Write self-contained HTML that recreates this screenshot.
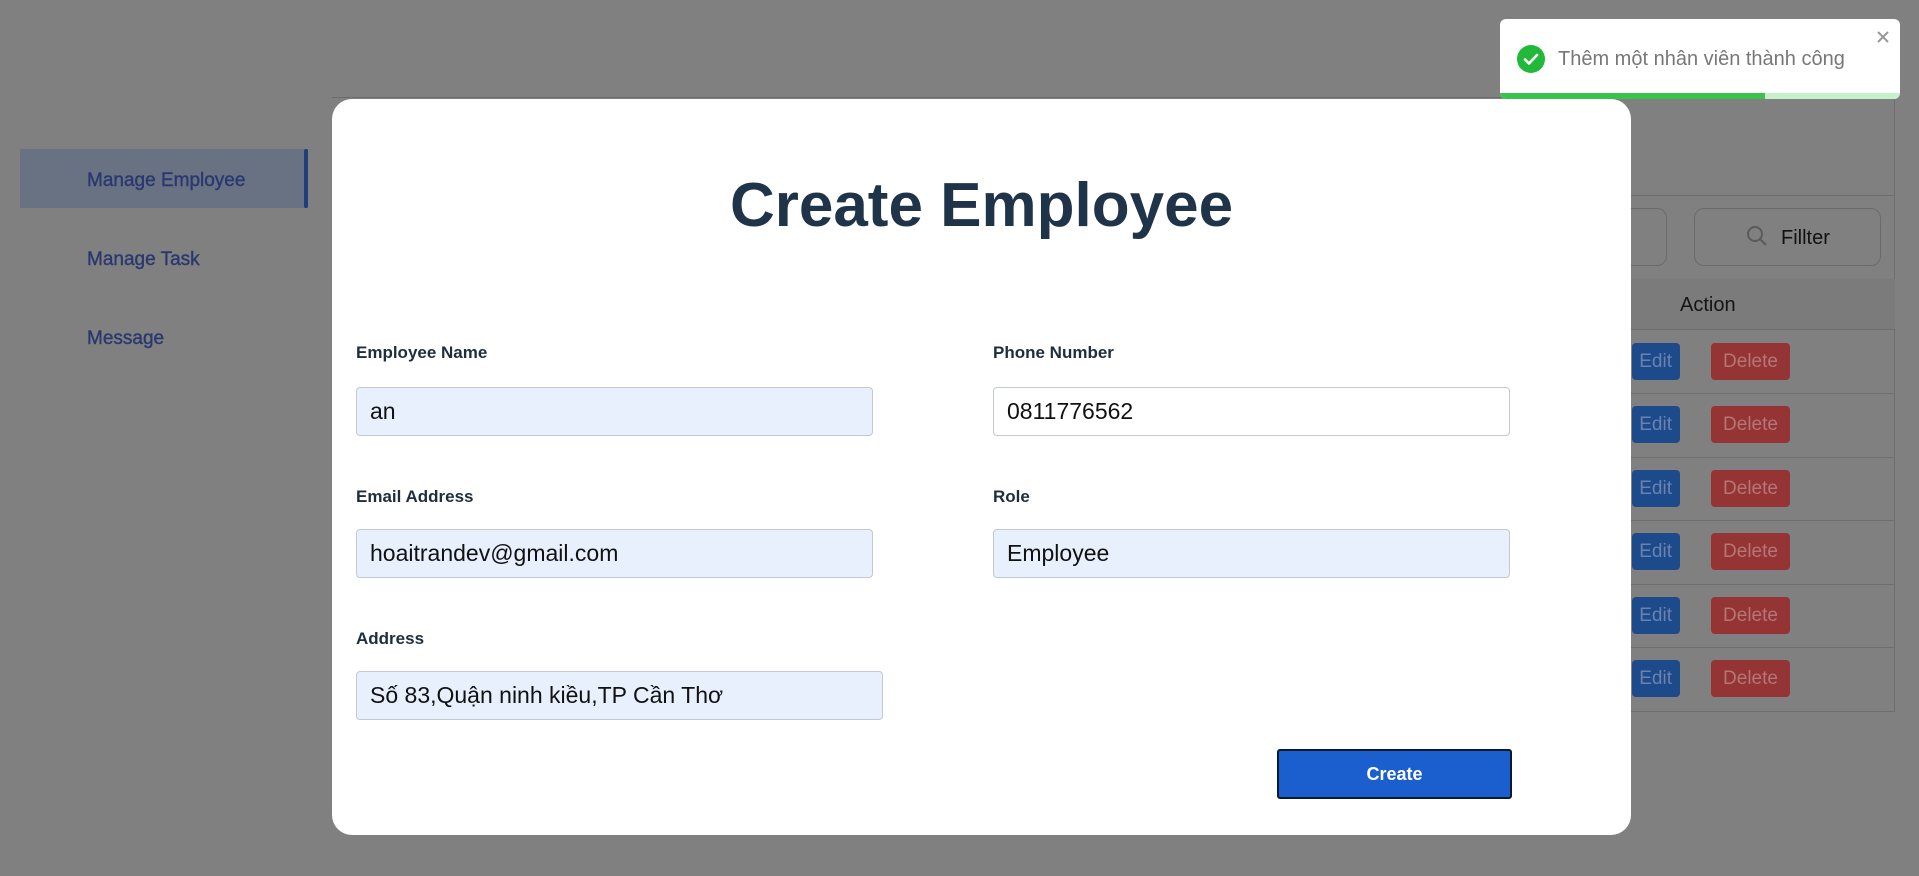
<!DOCTYPE html>
<html><head><meta charset="utf-8"><style>
*{box-sizing:border-box;margin:0;padding:0}
body{width:1919px;height:876px;background:#808080;position:relative;overflow:hidden;font-family:"Liberation Sans","Noto Sans CJK SC",sans-serif}
.a{position:absolute}
.nav{left:87px;font-size:19px;color:#2b3870;line-height:24px;-webkit-text-stroke:0.4px #2b3870}
.lbl{font-size:17px;font-weight:bold;color:#1f2d3d;line-height:20px}
.inp{height:49px;border:1px solid #c4c8d0;border-radius:4px;background:#e8f0fe;font-size:23px;color:#111;padding-left:13px;line-height:47px}
.edit{left:1632px;width:48px;height:37px;background:#1d4a8a;border-radius:4px;color:#6a82ad;font-size:19px;line-height:37px;text-align:right;padding-right:8px}
.del{left:1711px;width:79px;height:37px;background:#943434;border-radius:4px;color:#b57676;font-size:19px;line-height:37px;text-align:center}
.hl{left:1630px;width:265px;height:1px;background:#6e6e6e}
</style></head><body>
<div class="a" style="left:20px;top:149px;width:288px;height:59px;background:#687282"></div>
<div class="a" style="left:304px;top:149px;width:4px;height:59px;background:#1f3f7a;border-radius:2px"></div>
<div class="a nav" style="top:169px">Manage Employee</div>
<div class="a nav" style="top:248px">Manage Task</div>
<div class="a nav" style="top:327px">Message</div>
<div class="a" style="left:332px;top:97px;width:1563px;height:615px;border:1px solid #6e6e6e;border-left:none"></div>
<div class="a" style="left:332px;top:195px;width:1563px;height:1px;background:#6e6e6e"></div>
<div class="a" style="left:1600px;top:208px;width:67px;height:58px;border:1px solid #6a6a6a;border-radius:10px;border-left:none"></div>
<div class="a" style="left:1694px;top:208px;width:187px;height:58px;border:1px solid #6a6a6a;border-radius:10px"></div>
<svg class="a" style="left:1745px;top:224px" width="24" height="24" viewBox="0 0 24 24"><circle cx="10" cy="10" r="7" fill="none" stroke="#5a5a5a" stroke-width="2"/><path d="M15 15l6 6" stroke="#5a5a5a" stroke-width="2"/></svg>
<div class="a" style="left:1781px;top:227px;font-size:20px;color:#111">Fillter</div>
<div class="a" style="left:1630px;top:279px;width:265px;height:50px;background:#7b7b7b"></div>
<div class="a" style="left:1680px;top:294px;font-size:20px;color:#151515">Action</div>
<div class="a hl" style="top:329px"></div>
<div class="a edit" style="top:343px">Edit</div><div class="a del" style="top:343px">Delete</div>
<div class="a hl" style="top:393px"></div>
<div class="a edit" style="top:406px">Edit</div><div class="a del" style="top:406px">Delete</div>
<div class="a hl" style="top:457px"></div>
<div class="a edit" style="top:470px">Edit</div><div class="a del" style="top:470px">Delete</div>
<div class="a hl" style="top:520px"></div>
<div class="a edit" style="top:533px">Edit</div><div class="a del" style="top:533px">Delete</div>
<div class="a hl" style="top:584px"></div>
<div class="a edit" style="top:597px">Edit</div><div class="a del" style="top:597px">Delete</div>
<div class="a hl" style="top:647px"></div>
<div class="a edit" style="top:660px">Edit</div><div class="a del" style="top:660px">Delete</div>
<div class="a" style="left:332px;top:99px;width:1299px;height:736px;background:#fff;border-radius:20px"></div>
<div class="a" style="left:332px;top:168px;width:1299px;text-align:center;font-size:62px;font-weight:bold;color:#1f3349;line-height:76px">Create Employee</div>
<div class="a lbl" style="left:356px;top:343px">Employee Name</div>
<div class="a inp" style="left:356px;top:387px;width:517px">an</div>
<div class="a lbl" style="left:993px;top:343px">Phone Number</div>
<div class="a inp" style="left:993px;top:387px;width:517px;background:#fff">0811776562</div>
<div class="a lbl" style="left:356px;top:487px">Email Address</div>
<div class="a inp" style="left:356px;top:529px;width:517px">hoaitrandev@gmail.com</div>
<div class="a lbl" style="left:993px;top:487px">Role</div>
<div class="a inp" style="left:993px;top:529px;width:517px">Employee</div>
<div class="a lbl" style="left:356px;top:629px">Address</div>
<div class="a inp" style="left:356px;top:671px;width:527px">Số 83,Quận ninh kiều,TP Cần Thơ</div>
<div class="a" style="left:1277px;top:749px;width:235px;height:50px;background:#1b5fcf;border:2px solid #0b1930;border-radius:3px;color:#fff;font-size:18px;font-weight:bold;text-align:center;line-height:46px">Create</div>
<div class="a" style="left:1500px;top:19px;width:400px;height:80px;background:#fff;border-radius:6px;overflow:hidden">
<div class="a" style="left:0;top:74px;width:400px;height:6px;background:#c6f0cc"></div>
<div class="a" style="left:0;top:74px;width:265px;height:6px;background:#3ac34a"></div>
</div>
<svg class="a" style="left:1517px;top:45px" width="28" height="28" viewBox="0 0 28 28"><circle cx="14" cy="14" r="14" fill="#22b83a"/><path d="M8 14.5l4 4 8-8.5" fill="none" stroke="#fff" stroke-width="2.6" stroke-linecap="round" stroke-linejoin="round"/></svg>
<div class="a" style="left:1558px;top:47px;font-size:20px;color:#777;line-height:24px">Thêm một nhân viên thành công</div>
<svg class="a" style="left:1876px;top:30px" width="14" height="14" viewBox="0 0 14 14"><path d="M2 2l10 10M12 2L2 12" stroke="#999" stroke-width="2"/></svg>
</body></html>
